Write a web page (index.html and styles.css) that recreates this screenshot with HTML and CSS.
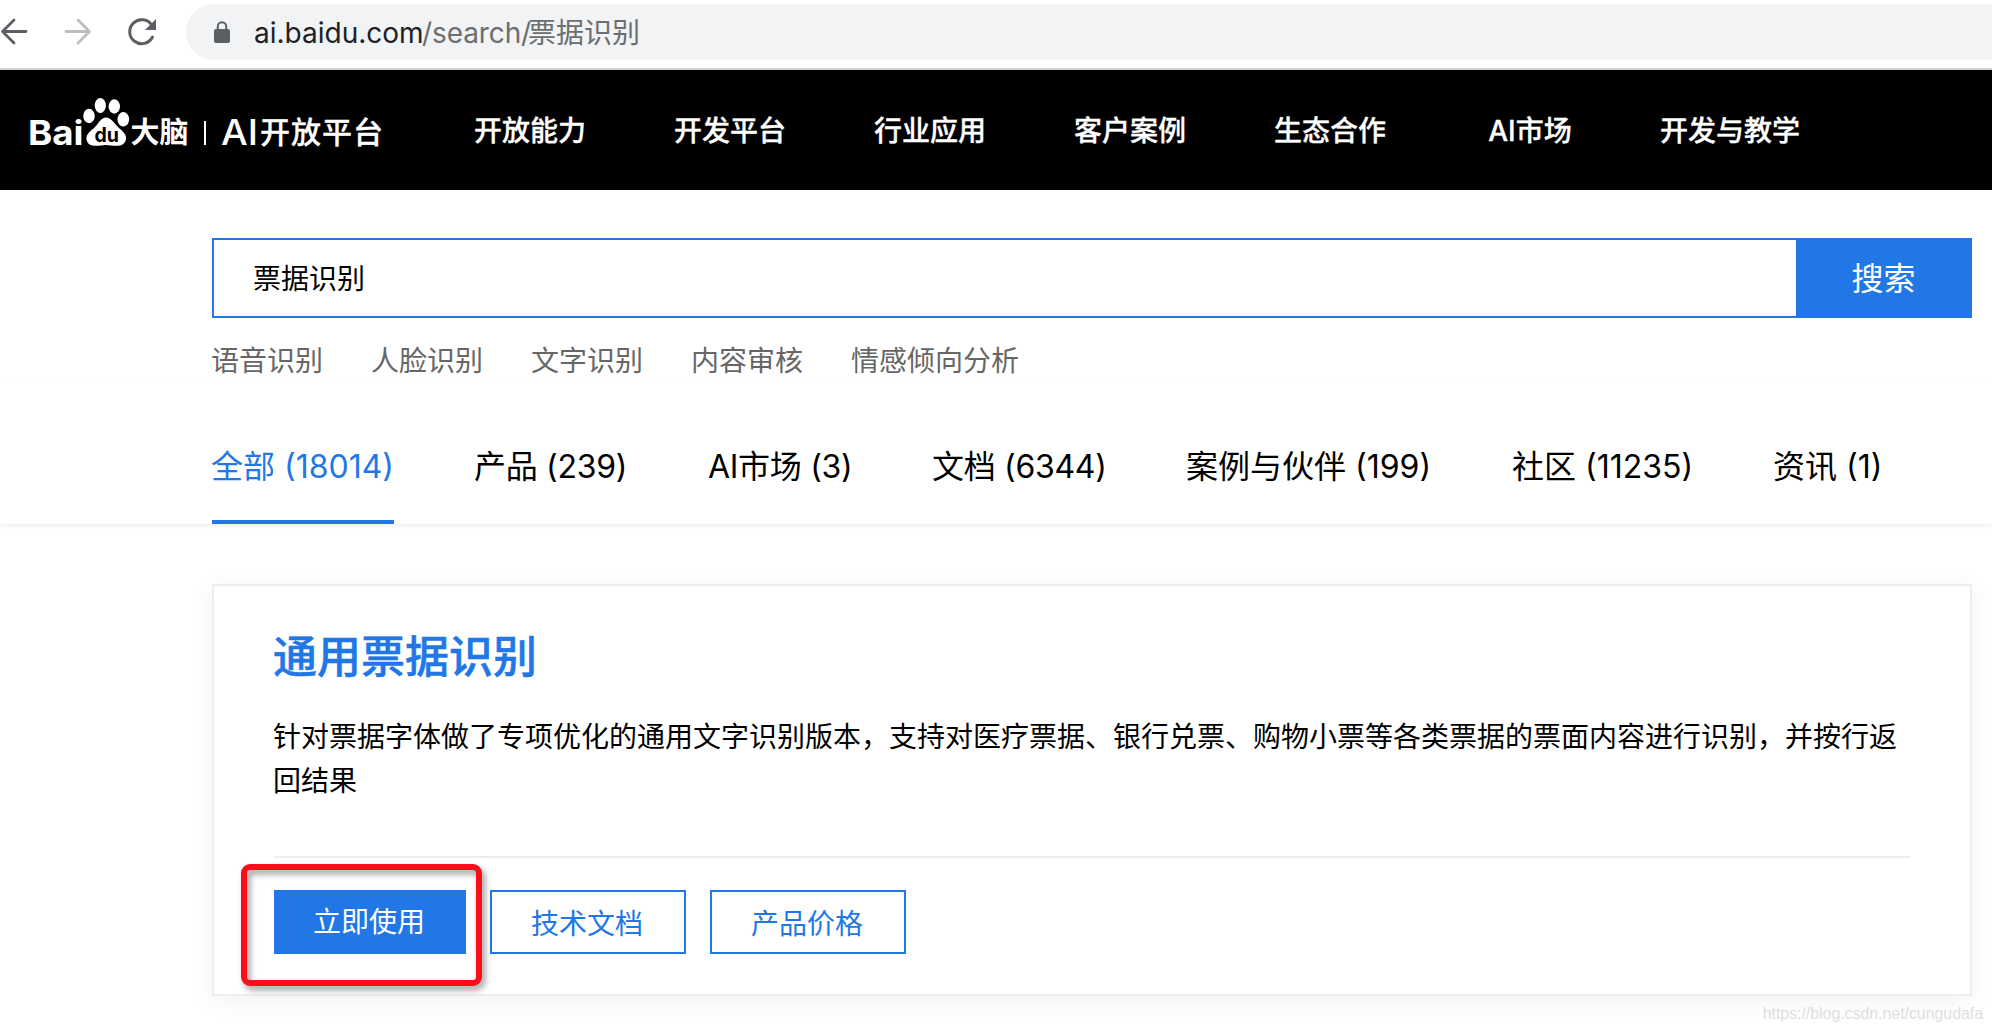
FILE: index.html
```html
<!DOCTYPE html>
<html lang="zh-CN">
<head>
<meta charset="utf-8">
<title>票据识别</title>
<link rel="stylesheet" href="styles.css">
</head>
<body>
<div class="toolbar">
  <svg class="controls" width="186" height="64" viewBox="0 0 186 64" fill="none" stroke-width="2.8" stroke-linecap="round" stroke-linejoin="round">
    <path d="M26 31.500H3M14 20L2.500 31.500L14 43" stroke="#5b5f64"/>
    <path d="M66 31.500H89M78 20L89.500 31.500L78 43" stroke="#bcbec0"/>
    <path d="M152 25.500A12 12 0 1 0 152.500 37" stroke="#5b5f64" stroke-width="3"/>
    <path d="M156 19V30H145Z" fill="#5b5f64"/>
  </svg>
  <div class="address">
    <svg class="lock" width="18" height="22" viewBox="0 0 18 22"><rect x="1" y="8" width="16" height="14" rx="2" fill="#5b5f64"/><path d="M4.800 9V5.500a4.200 4.200 0 0 1 8.400 0V9" fill="none" stroke="#5b5f64" stroke-width="2"/></svg>
    <span class="host">ai.baidu.com</span><span class="path">/search/</span><span class="query">票据识别</span>
  </div>
</div>
<header class="site-header">
  <svg class="logo" width="430" height="120" viewBox="0 70 430 120" fill="#fff">
    <text class="logo-bold" x="28" y="144.500" font-size="34" textLength="55.500" lengthAdjust="spacingAndGlyphs">Bai</text>
    <ellipse cx="89" cy="116" rx="5.800" ry="7.200"/>
    <ellipse cx="100.300" cy="105.500" rx="5.600" ry="7.500"/>
    <ellipse cx="114.300" cy="106.500" rx="5.700" ry="7.200"/>
    <ellipse cx="123.300" cy="119.300" rx="5.800" ry="7.200"/>
    <path d="M106 117.500C111 117.500 114 123 118 127C122 131 127 134 126 139.500C124 147.500 116 146 106 145C96 146 88 147.500 86.500 139.500C85.500 134 91 131 95 127C99 123 101 117.500 106 117.500Z"/>
    <text class="logo-bold logo-du" x="94.500" y="141.500" font-size="20" textLength="24.500" lengthAdjust="spacingAndGlyphs">du</text>
    <text class="logo-cjk" x="130.500" y="143.200" font-size="29" textLength="58">大脑</text>
    <rect x="204" y="121" width="2" height="24"/>
    <text class="logo-latin" x="221" y="144.500" font-size="35" textLength="37" lengthAdjust="spacingAndGlyphs">AI</text>
    <text class="logo-name" x="260" y="143" font-size="30" textLength="123">开放平台</text>
  </svg>
  <nav class="nav"><a>开放能力</a><a>开发平台</a><a>行业应用</a><a>客户案例</a><a>生态合作</a><a>AI市场</a><a>开发与教学</a></nav>
</header>
<main>
  <div class="search"><div class="field">票据识别</div><div class="submit">搜索</div></div>
  <div class="hot"><a>语音识别</a><a>人脸识别</a><a>文字识别</a><a>内容审核</a><a>情感倾向分析</a></div>
  <div class="tabs"><a class="active">全部 (18014)</a><a class="tight">产品 (239)</a><a class="tight">AI市场 (3)</a><a class="tight">文档 (6344)</a><a>案例与伙伴 (199)</a><a>社区 (11235)</a><a>资讯 (1)</a></div>
  <section class="card">
    <h2>通用票据识别</h2>
    <p>针对票据字体做了专项优化的通用文字识别版本，支持对医疗票据、银行兑票、购物小票等各类票据的票面内容进行识别，并按行返回结果</p>
    <div class="actions"><a class="primary">立即使用<span class="marker"></span></a><a>技术文档</a><a>产品价格</a></div>
  </section>
</main>
<div class="watermark">https://blog.csdn.net/cungudafa</div>
</body>
</html>
```
FILE: styles.css
```css
* { box-sizing: border-box; }
body {
  position: relative;
  margin: 0;
  width: 1992px;
  height: 1032px;
  overflow: hidden;
  background: #fff;
  color: #000;
  font: 28px/44px Inter, "Noto Sans CJK SC", sans-serif;
}
.toolbar {
  display: flex;
  height: 70px;
  padding-top: 4px;
  border-bottom: 2px solid #d2d2d2;
}
.controls { margin-top: -4px; flex: none; }
.address {
  display: flex;
  align-items: center;
  flex: 1;
  height: 56px;
  padding-left: 27px;
  border-radius: 28px 0 0 28px;
  background: #f1f3f4;
  color: #6b6e72;
  white-space: nowrap;
}
.lock { margin-right: 23px; }
.host { width: 168px; color: #202124; }
.path { width: 106px; letter-spacing: -.1px; }
.host, .path, .query { padding-top: 1px; }
.site-header {
  display: flex;
  height: 120px;
  background: #000;
  color: #fff;
}
.logo { flex: none; }
.logo-bold { font-family: Inter, sans-serif; font-weight: 700; }
.logo-du { fill: #000; }
.logo-cjk { font-family: "Noto Sans CJK SC", sans-serif; font-weight: 700; }
.logo-latin { font-family: Inter, sans-serif; font-weight: 500; }
.logo-name { font-family: "Noto Sans CJK SC", sans-serif; font-weight: 500; stroke: #fff; stroke-width: .3px; }
.nav { display: flex; font-weight: 500; -webkit-text-stroke: .3px #fff; }
.nav a { width: 200px; line-height: 122px; text-align: center; }
.search { display: flex; margin: 48px 20px 0 212px; height: 80px; }
.field {
  flex: 1;
  padding-left: 39px;
  border: 2px solid #2277e6;
  border-right: 0;
  line-height: 78px;
}
.submit {
  width: 176px;
  padding-right: 1px;
  background: #2277e6;
  color: #fff;
  font-size: 32px;
  line-height: 82px;
  text-align: center;
}
.hot {
  display: flex;
  gap: 48px;
  margin-top: 21px;
  padding-left: 211px;
  color: #666;
}
.tabs {
  display: grid;
  grid-template-columns: 182px 154px 144px 174px 246px 181px 110px;
  column-gap: 80px;
  height: 141px;
  padding: 27px 0 0 212px;
  box-shadow: 0 2px 4px rgba(0, 0, 0, .07);
  font-size: 32px;
  line-height: 110px;
  white-space: nowrap;
}
.tabs a { height: 114px; padding-top: 2px; }
.tabs .tight { letter-spacing: -.3px; }
.tabs .active {
  border-bottom: 4px solid #2277e6;
  color: #2277e6;
  text-indent: -1px;
}
.card {
  margin: 60px 20px 0 212px;
  height: 412px;
  padding: 38px 60px 0;
  border: 2px solid #eee;
  box-shadow: 0 4px 24px rgba(0, 0, 0, .06);
}
.card h2 {
  margin: 0 0 0 -1px;
  color: #2277e6;
  font-size: 44px;
  font-weight: 500;
  line-height: 66px;
  -webkit-text-stroke: .5px #2277e6;
}
.card p { margin: 25px 0 0 -1px; height: 141px; }
.actions {
  display: flex;
  gap: 24px;
  padding-top: 32px;
  border-top: 2px solid #ededed;
}
.actions a {
  width: 196px;
  height: 64px;
  padding-right: 2px;
  border: 2px solid #2277e6;
  color: #2277e6;
  line-height: 65px;
  text-align: center;
}
.actions .primary {
  position: relative;
  width: 192px;
  background: #2277e6;
  color: #fff;
  line-height: 61px;
}
.marker {
  position: absolute;
  left: -35px;
  top: -28px;
  width: 241px;
  height: 122px;
  border: 6px solid #fc0d1b;
  border-radius: 9px;
  filter: drop-shadow(3px 4px 3px rgba(0, 0, 0, .4));
}
.watermark {
  position: absolute;
  right: 9px;
  bottom: 8px;
  color: #dedede;
  font: 16px/20px "Liberation Sans", sans-serif;
  letter-spacing: -.07px;
}
```
